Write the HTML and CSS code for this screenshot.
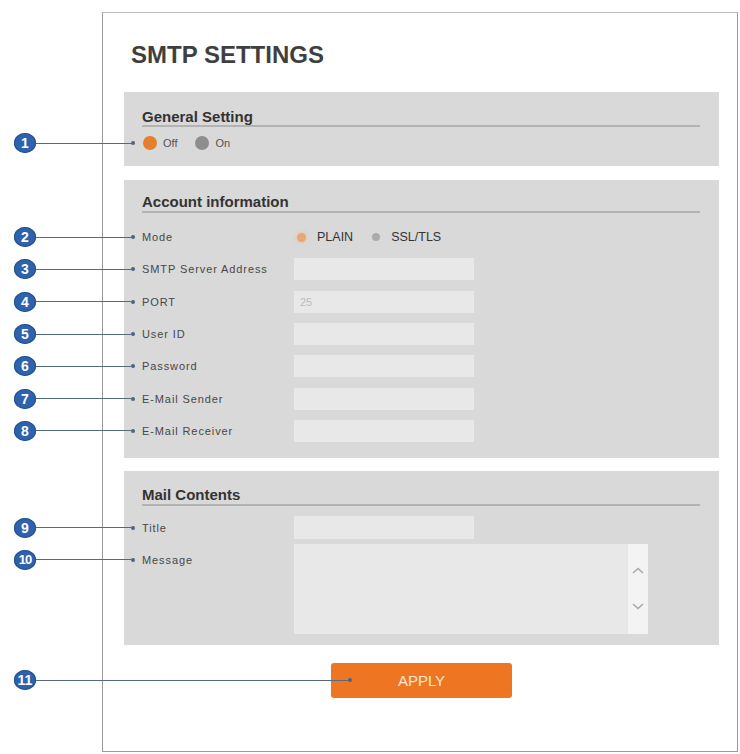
FILE: index.html
```html
<!DOCTYPE html>
<html lang="en">
<head>
<meta charset="utf-8">
<title>SMTP Settings</title>
<link rel="stylesheet" href="styles.css">
</head>
<body>
<div class="card">
  <h1 class="title">SMTP SETTINGS</h1>

  <section class="panel panel-general">
    <h2 class="panel-head">General Setting</h2>
    <div class="toggle-row">
      <span class="callout"><span class="num">1</span><span class="line"></span><span class="tip"></span></span>
      <span class="bigdot bigdot-on"></span><span class="opt">Off</span>
      <span class="bigdot bigdot-off"></span><span class="opt">On</span>
    </div>
  </section>

  <section class="panel panel-account">
    <h2 class="panel-head">Account information</h2>
    <div class="rows">
      <div class="row">
        <span class="label"><span class="callout"><span class="num">2</span><span class="line"></span><span class="tip"></span></span>Mode</span>
        <span class="modes">
          <span class="smalldot smalldot-on"></span><span class="mode-txt">PLAIN</span>
          <span class="smalldot smalldot-off"></span><span class="mode-txt">SSL/TLS</span>
        </span>
      </div>
      <div class="row">
        <span class="label"><span class="callout"><span class="num">3</span><span class="line"></span><span class="tip"></span></span>SMTP Server Address</span>
        <input class="field" type="text">
      </div>
      <div class="row">
        <span class="label"><span class="callout"><span class="num">4</span><span class="line"></span><span class="tip"></span></span>PORT</span>
        <input class="field field-faint" type="text" value="25">
      </div>
      <div class="row">
        <span class="label"><span class="callout"><span class="num">5</span><span class="line"></span><span class="tip"></span></span>User ID</span>
        <input class="field" type="text">
      </div>
      <div class="row">
        <span class="label"><span class="callout"><span class="num">6</span><span class="line"></span><span class="tip"></span></span>Password</span>
        <input class="field" type="password">
      </div>
      <div class="row">
        <span class="label"><span class="callout"><span class="num">7</span><span class="line"></span><span class="tip"></span></span>E-Mail Sender</span>
        <input class="field" type="text">
      </div>
      <div class="row">
        <span class="label"><span class="callout"><span class="num">8</span><span class="line"></span><span class="tip"></span></span>E-Mail Receiver</span>
        <input class="field" type="text">
      </div>
    </div>
  </section>

  <section class="panel panel-mail">
    <h2 class="panel-head">Mail Contents</h2>
    <div class="mail-rows">
      <div class="row row-title">
        <span class="label"><span class="callout"><span class="num">9</span><span class="line"></span><span class="tip"></span></span>Title</span>
        <input class="field field-title" type="text">
      </div>
      <div class="row row-msg">
        <span class="label label-msg"><span class="callout"><span class="num num-ten">10</span><span class="line"></span><span class="tip"></span></span>Message</span>
        <div class="textarea">
          <div class="ta-body"></div>
          <div class="ta-scroll">
            <svg class="chev" width="12" height="7" viewBox="0 0 12 7"><path d="M1 6 L6 1.5 L11 6" fill="none" stroke="#a9a9a9" stroke-width="1.6"/></svg>
            <svg class="chev" width="12" height="7" viewBox="0 0 12 7"><path d="M1 1 L6 5.5 L11 1" fill="none" stroke="#a9a9a9" stroke-width="1.6"/></svg>
          </div>
        </div>
      </div>
    </div>
  </section>

  <div class="actions">
    <button class="apply" type="button">
      <span class="callout callout-btn"><span class="num">11</span><span class="line"></span><span class="tip"></span></span>
      APPLY
    </button>
  </div>
</div>
</body>
</html>
```

FILE: styles.css
```css
html, body {
  margin: 0;
  padding: 0;
  background: #ffffff;
}

body {
  font-family: "Liberation Sans", Arial, sans-serif;
  color: #444444;
}

.card {
  box-sizing: border-box;
  width: 636px;
  margin: 12px 0 0 102px;
  padding: 28px 18px 53px 21px;
  border: 1px solid #9a9a9a;
  border-top-color: #bdbdbd;
  background: #ffffff;
}

.title {
  margin: 0 0 23px 7px;
  font-size: 24px;
  line-height: 28px;
  font-weight: bold;
  color: #3f3f3f;
}

.panel {
  background: #d9d9d9;
  padding: 16px 19px 15px 18px;
}

.panel-general { margin-bottom: 14px; }
.panel-account { padding-top: 13px; padding-bottom: 11px; margin-bottom: 13px; }
.panel-mail { padding-top: 15px; padding-bottom: 11px; }

.panel-head {
  margin: 0;
  font-size: 15px;
  line-height: 18px;
  font-weight: bold;
  color: #333333;
  border-bottom: 2px solid #b3b3b3;
}

.panel-general .panel-head { line-height: 17px; }

/* general on/off */
.toggle-row {
  position: relative;
  display: flex;
  align-items: center;
  height: 16px;
  margin-top: 8px;
  padding-left: 1px;
}

.bigdot {
  width: 14px;
  height: 14px;
  border-radius: 50%;
  flex: none;
}
.bigdot-on { background: #e37f2d; }
.bigdot-off { background: #8e8e8e; margin-left: 18px; }

.opt {
  margin-left: 6px;
  font-size: 11px;
  color: #555555;
}

/* rows */
.rows { margin-top: 8px; }
.mail-rows { margin-top: 5.5px; }

.row {
  display: flex;
  align-items: center;
  height: 32.3px;
}

.row-title { height: 32px; }

.label {
  position: relative;
  width: 152px;
  flex: none;
  font-size: 11px;
  letter-spacing: 0.9px;
  color: #474747;
  white-space: nowrap;
}

.field {
  box-sizing: border-box;
  width: 180px;
  height: 22px;
  margin: 0;
  padding: 0 6px;
  border: none;
  outline: none;
  background: #e8e8e8;
  font-family: "Liberation Sans", Arial, sans-serif;
  font-size: 11px;
  color: #444444;
}

.field-faint { color: #bdbdbd; }
.field-title { height: 23px; }

.modes {
  display: flex;
  align-items: center;
  padding-left: 3px;
}

.smalldot {
  width: 9px;
  height: 9px;
  border-radius: 50%;
  flex: none;
}
.smalldot-on {
  background: #e9a679;
  box-shadow: 0 0 3px 1px rgba(240, 190, 150, 0.6);
}
.smalldot-off {
  background: #ababab;
  margin-left: 19px;
  width: 8px;
  height: 8px;
}

.mode-txt {
  margin-left: 11px;
  font-size: 12.5px;
  color: #333333;
}

/* message */
.row.row-msg {
  height: auto;
  align-items: flex-start;
}

.label-msg {
  height: 32px;
  line-height: 32px;
}

.textarea {
  display: flex;
  width: 354px;
  height: 90px;
  background: #e8e8e8;
}

.ta-body { flex: 1; }

.ta-scroll {
  width: 20px;
  background: #f3f3f3;
  display: flex;
  flex-direction: column;
  align-items: center;
  justify-content: space-between;
  padding: 23px 0 24px;
  box-sizing: border-box;
}

.chev { display: block; }

/* actions */
.actions {
  display: flex;
  justify-content: center;
  margin-top: 18px;
}

.apply {
  position: relative;
  width: 181px;
  height: 35px;
  border: none;
  border-radius: 3px;
  background: #ee7623;
  color: #fde6d4;
  font-family: "Liberation Sans", Arial, sans-serif;
  font-size: 15px;
  padding: 0;
}

/* annotation callouts */
.callout {
  position: absolute;
  right: calc(100% + 7px);
  top: 50%;
  transform: translateY(-50%);
  width: 121px;
  display: flex;
  align-items: center;
  z-index: 2;
  letter-spacing: 0;
}

.callout-btn {
  right: calc(100% - 21px);
  width: 338px;
}

.num {
  flex: none;
  width: 22px;
  height: 20px;
  border-radius: 50%;
  background: #2f62ad;
  box-shadow: inset 0 0 0 1px #24508f;
  color: #ffffff;
  font-family: "Liberation Sans", Arial, sans-serif;
  font-size: 14px;
  font-weight: bold;
  line-height: 20px;
  text-align: center;
}

.num-ten {
  font-size: 13px;
  letter-spacing: -1px;
}

.line {
  flex: 1;
  height: 1px;
  background: #556a80;
}

.tip {
  flex: none;
  width: 4px;
  height: 4px;
  border-radius: 50%;
  background: #4a6584;
}
```
